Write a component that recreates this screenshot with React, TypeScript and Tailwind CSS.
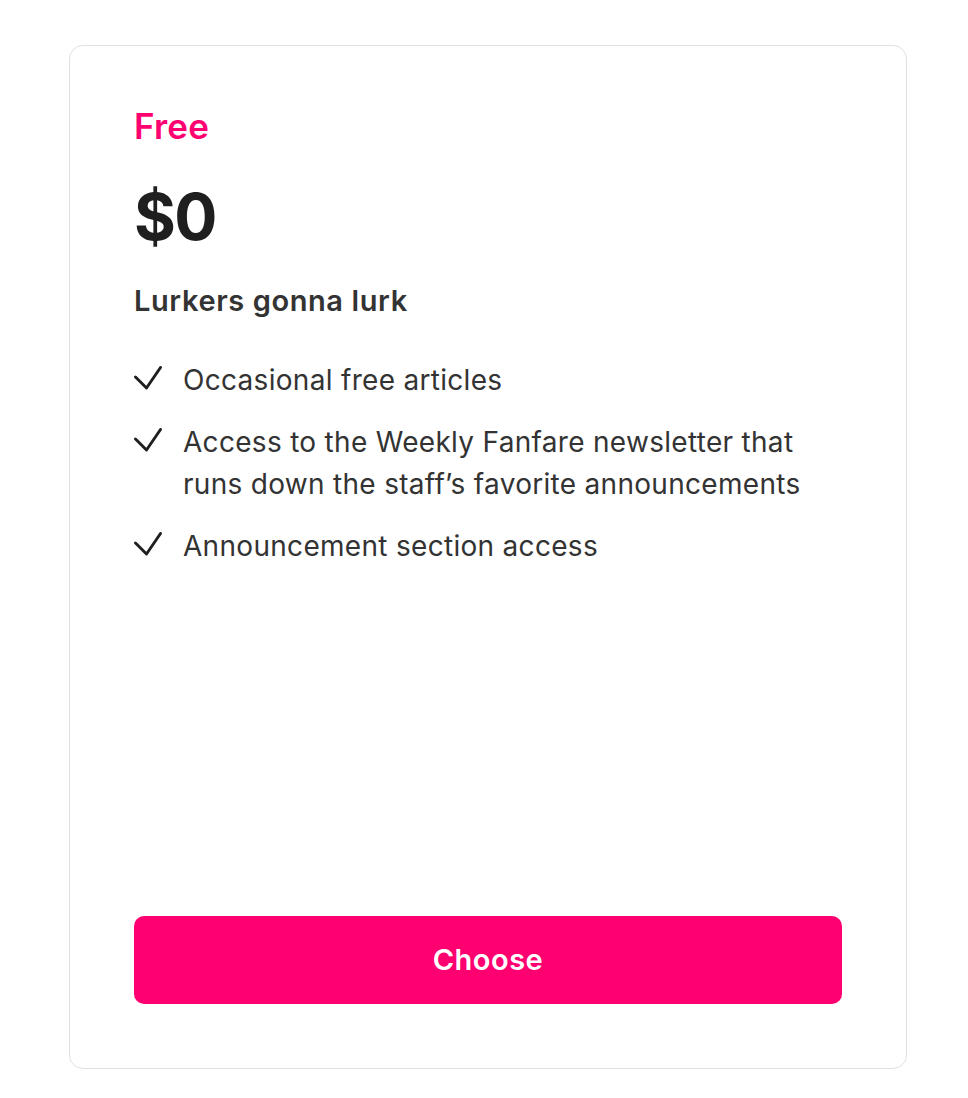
import React from "react";

const features = [
  "Occasional free articles",
  "Access to the Weekly Fanfare newsletter that runs down the staff\u2019s favorite announcements",
  "Announcement section access",
];

function CheckMark() {
  return (
    <svg width="28" height="24" viewBox="0 0 28 24" fill="none" className="shrink-0 mt-[7px]">
      <polyline
        points="1.5,11 12.5,22 26.5,1.5"
        stroke="#1f1f1f"
        strokeWidth="2.9"
        strokeLinecap="round"
        strokeLinejoin="round"
      />
    </svg>
  );
}

export default function App() {
  return (
    <div className="min-h-screen bg-white pt-[45px] pl-[69px] font-['Inter',sans-serif]">
      <div className="w-[838px] h-[1024px] rounded-[14px] border border-[#e0e0e0] bg-white p-16 flex flex-col">
        <p className="text-[35px] leading-[32px] font-semibold tracking-[0.2px] text-[#ff0070]">Free</p>
        <h2 className="mt-[43px] text-[64px] leading-[64px] font-bold tracking-tight text-[#1f1f1f]">$0</h2>
        <p className="mt-[34px] text-[29px] leading-[36px] font-semibold tracking-[0.6px] text-[#333]">
          Lurkers gonna lurk
        </p>
        <ul className="mt-[40px] flex flex-col gap-[20px]">
          {features.map((f) => (
            <li key={f} className="flex items-start gap-[21px]">
              <CheckMark />
              <span className="text-[28px] leading-[42px] tracking-[0.3px] text-[#333]">{f}</span>
            </li>
          ))}
        </ul>
        <button className="mt-auto h-[88px] w-full rounded-[10px] bg-[#ff0070] text-white text-[29px] font-semibold tracking-[0.5px]">
          Choose
        </button>
      </div>
    </div>
  );
}
